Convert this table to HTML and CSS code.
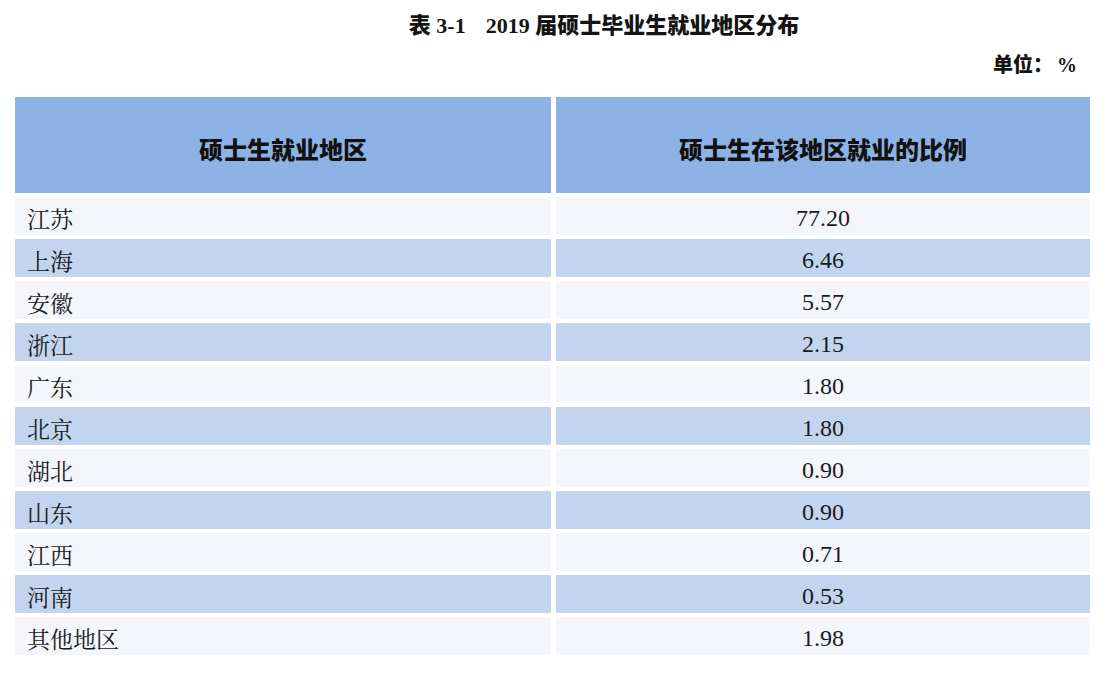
FILE: index.html
```html
<!DOCTYPE html>
<html lang="zh-CN">
<head>
<meta charset="utf-8">
<title>表 3-1 2019 届硕士毕业生就业地区分布</title>
<link rel="stylesheet" href="styles.css">
</head>
<body>
<div class="page">
  <h1 class="title"><span class="cjk">表</span> <span class="num">3-1</span><span class="sp"></span><span class="num">2019</span> <span class="cjk">届硕士毕业生就业地区分布</span></h1>
  <div class="unit"><span class="cjk">单位：</span><span class="num">%</span></div>
  <div class="table">
    <div class="th">硕士生就业地区</div>
    <div class="th">硕士生在该地区就业的比例</div>

    <div class="td name">江苏</div><div class="td val">77.20</div>
    <div class="td name alt">上海</div><div class="td val alt">6.46</div>
    <div class="td name">安徽</div><div class="td val">5.57</div>
    <div class="td name alt">浙江</div><div class="td val alt">2.15</div>
    <div class="td name">广东</div><div class="td val">1.80</div>
    <div class="td name alt">北京</div><div class="td val alt">1.80</div>
    <div class="td name">湖北</div><div class="td val">0.90</div>
    <div class="td name alt">山东</div><div class="td val alt">0.90</div>
    <div class="td name">江西</div><div class="td val">0.71</div>
    <div class="td name alt">河南</div><div class="td val alt">0.53</div>
    <div class="td name">其他地区</div><div class="td val">1.98</div>
  </div>
</div>
</body>
</html>
```

FILE: styles.css
```css
html, body {
  margin: 0;
  padding: 0;
  background: #ffffff;
}

.page {
  width: 1108px;
  height: 676px;
  overflow: hidden;
  color: #141414;
}

.cjk {
  font-family: "Noto Sans CJK SC", sans-serif;
}

.num {
  font-family: "Liberation Serif", "Times New Roman", serif;
}

.title {
  margin: 0;
  padding: 8px 0 0 100px;
  height: 30px;
  line-height: 30px;
  font-size: 22px;
  font-weight: 900;
  text-align: center;
  white-space: nowrap;
}

.title .num {
  font-weight: 700;
}

.sp {
  display: inline-block;
  width: 20px;
}

.unit {
  height: 59px;
  line-height: 52px;
  padding-right: 31px;
  text-align: right;
  font-size: 20px;
  font-weight: 900;
}

.unit .num {
  font-weight: 700;
  margin-left: 4px;
}

.table {
  margin-left: 15px;
  display: grid;
  grid-template-columns: 536px 534px;
  grid-auto-rows: 38px;
  grid-template-rows: 96px;
  column-gap: 5px;
  row-gap: 4px;
}

.th {
  background: #8db3e6;
  display: flex;
  align-items: center;
  justify-content: center;
  padding-top: 6px;
  box-sizing: border-box;
  font-family: "Noto Sans CJK SC", sans-serif;
  font-weight: 900;
  font-size: 24px;
  color: #111111;
}

.td {
  background: #f4f6fc;
  display: flex;
  align-items: center;
  box-sizing: border-box;
  padding-top: 4px;
  color: #1a1a22;
}

.td.alt {
  background: #c3d5ee;
}

.name {
  padding-left: 12px;
  font-family: "Noto Serif CJK SC", "Noto Sans CJK SC", serif;
  font-size: 23px;
  font-weight: 400;
}

.val {
  justify-content: center;
  font-family: "Liberation Serif", "Times New Roman", serif;
  font-size: 24px;
}
```
